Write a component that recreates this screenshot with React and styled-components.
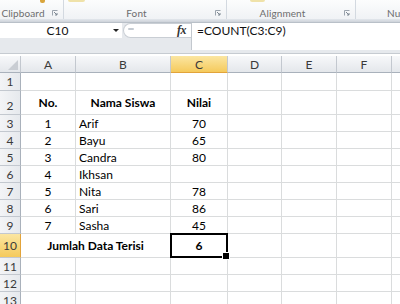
import React from 'react';
import styled, { createGlobalStyle, css } from 'styled-components';

const GlobalStyle = createGlobalStyle`
  html, body { margin: 0; padding: 0; background: #fff; overflow: hidden; }
  body { font-family: Lato, "Liberation Sans", sans-serif; width: 400px; height: 304px; }
  * { box-sizing: border-box; }
`;

const COLS = [21, 55, 95, 57, 54, 55, 55, 60];
const HEADER_BORDER = '#c3c8cf';
const GRID = '#dadcdd';

/* ---------- Ribbon ---------- */
const Ribbon = styled.div`
  display: flex;
  height: 19px;
  background: linear-gradient(#fcfdfd, #f0f2f5);
  overflow: hidden;
`;

const Group = styled.div`
  flex: none;
  width: ${(p) => p.$w}px;
  height: 100%;
  display: flex;
  flex-direction: column;
  border-right: 1px solid #d3d9e0;
`;

const IconStrip = styled.div`
  height: 5px;
  display: flex;
  align-items: flex-start;
`;

const IconBit = styled.span`
  display: block;
  margin-left: ${(p) => p.$x}px;
  width: ${(p) => p.$w}px;
  height: ${(p) => p.$h}px;
  background: ${(p) => p.$c};
  border-radius: 0 0 2px 2px;
`;

const LabelRow = styled.div`
  flex: 1;
  display: flex;
  align-items: center;
  padding-top: 3px;
`;

const GroupLabel = styled.span`
  flex: 1;
  text-align: ${(p) => (p.$left ? 'left' : 'center')};
  padding-left: ${(p) => (p.$left ? '31px' : '0')};
  padding-right: ${(p) => (p.$left ? '0' : '6px')};
  font-size: 10px;
  letter-spacing: 0.1px;
  color: #6d6d6d;
  white-space: nowrap;
`;

const LauncherBox = styled.span`
  flex: none;
  width: 6px;
  height: 6px;
  margin-right: 5px;
  display: flex;
`;

const Launcher = () => (
  <LauncherBox>
    <svg width="6" height="6" viewBox="0 0 6 6">
      <path d="M0.5 5.5V0.5H5.5" stroke="#9aa3ad" fill="none" strokeWidth="1" />
      <path d="M2 2L5 5M5 3V5H3" stroke="#7d8792" fill="none" strokeWidth="1" />
    </svg>
  </LauncherBox>
);

const RibbonEdge = styled.div`
  height: 4px;
  background: linear-gradient(#e3e7ec, #cdd2d9);
  border-bottom: 1px solid #b9c0c8;
`;

/* ---------- Formula bar ---------- */
const FormulaBar = styled.div`
  display: flex;
  height: 31px;
  background: #e6e9ed;
  border-bottom: 1px solid #c6cbd1;
`;

const NameBox = styled.div`
  flex: none;
  width: 122px;
  height: 15px;
  background: #fff;
  display: flex;
  align-items: center;
  font-size: 12px;
  color: #111;
`;

const NameText = styled.span`
  flex: 1;
  text-align: center;
  padding-left: 2px;
`;

const DropArrow = styled.span`
  width: 0;
  height: 0;
  margin-right: 3px;
  border-left: 3px solid transparent;
  border-right: 3px solid transparent;
  border-top: 3px solid #222;
`;

const FxBox = styled.div`
  flex: none;
  width: 68px;
  height: 15px;
  margin-left: 1px;
  background: #fff;
  border: 1px solid #c9ced4;
  border-right: none;
  border-radius: 8px 0 0 8px;
  display: flex;
  align-items: center;
  justify-content: space-between;
  padding: 0 5px 0 4px;
`;

const Grip = styled.span`
  width: 6px;
  height: 2px;
  background: #c5cbd2;
  border-radius: 1px;
  margin-top: -4px;
`;

const Fx = styled.span`
  font-family: "Liberation Serif", serif;
  font-style: italic;
  font-weight: bold;
  font-size: 12px;
  color: #333;
  letter-spacing: -0.5px;
`;

const FormulaInput = styled.div`
  flex: 1;
  height: 27px;
  background: #fff;
  border-left: 1px solid #c3c8ce;
  padding-left: 5px;
  font-size: 12px;
  line-height: 15px;
  color: #111;
`;

const Gap = styled.div`
  height: 2px;
  background: #fff;
`;

/* ---------- Grid ---------- */
const Sheet = styled.div`
  display: flex;
  flex-direction: column;
  font-size: 12px;
`;

const Row = styled.div`
  display: flex;
  flex: none;
  height: ${(p) => p.$h}px;
`;

const HeaderCell = styled.div`
  flex: none;
  width: ${(p) => p.$w}px;
  height: 100%;
  display: flex;
  align-items: center;
  justify-content: center;
  color: #3a3a3a;
  font-size: 12px;
  border-right: 1px solid ${HEADER_BORDER};
  border-bottom: 1px solid #a9b1bb;
  background: linear-gradient(#f7f8fa, #e4e7eb);
  ${(p) =>
    p.$sel &&
    css`
      background: linear-gradient(#fbe6a2, #f5ca5c);
      border-bottom-color: #e2a33a;
    `}
`;

const Corner = styled(HeaderCell)`
  align-items: flex-end;
  justify-content: flex-end;
  padding: 0 2px 2px 0;
`;

const RowHead = styled.div`
  flex: none;
  width: ${COLS[0]}px;
  height: 100%;
  display: flex;
  align-items: ${(p) => (p.$bottom ? 'flex-end' : 'center')};
  justify-content: center;
  padding-bottom: ${(p) => (p.$bottom ? '1px' : '0')};
  color: #3a3a3a;
  font-size: 12px;
  border-right: 1px solid #a9b1bb;
  border-bottom: 1px solid ${HEADER_BORDER};
  background: linear-gradient(90deg, #f3f4f6, #e6e9ed);
  ${(p) =>
    p.$sel &&
    css`
      background: linear-gradient(#fbe6a2, #f5ca5c);
      border-right-color: #e2a33a;
    `}
`;

const Cell = styled.div`
  position: relative;
  flex: none;
  width: ${(p) => p.$w}px;
  height: 100%;
  display: flex;
  align-items: center;
  justify-content: ${(p) => (p.$align === 'left' ? 'flex-start' : 'center')};
  padding-left: ${(p) => (p.$align === 'left' ? '3px' : '0')};
  font-weight: ${(p) => (p.$bold ? 700 : 400)};
  color: #000;
  white-space: nowrap;
  border-right: 1px solid ${GRID};
  border-bottom: 1px solid ${GRID};
  ${(p) =>
    p.$active &&
    css`
      &::after {
        content: '';
        position: absolute;
        top: -1px;
        left: -1px;
        right: -1px;
        bottom: -1px;
        border: 2px solid #000;
      }
      &::before {
        content: '';
        position: absolute;
        right: -3px;
        bottom: -3px;
        width: 6px;
        height: 6px;
        background: #000;
        border: 1px solid #fff;
        z-index: 2;
      }
    `}
`;

const CornerTriangle = () => (
  <svg width="10" height="10" viewBox="0 0 10 10">
    <path d="M10 0V10H0Z" fill="#c9cdd3" />
  </svg>
);

const LETTERS = ['A', 'B', 'C', 'D', 'E', 'F', 'G'];

const students = [
  ['1', 'Arif', '70'],
  ['2', 'Bayu', '65'],
  ['3', 'Candra', '80'],
  ['4', 'Ikhsan', ''],
  ['5', 'Nita', '78'],
  ['6', 'Sari', '86'],
  ['7', 'Sasha', '45'],
];

const EmptyTail = () =>
  COLS.slice(4).map((w, i) => <Cell key={i} $w={w} />);

export default function App() {
  return (
    <>
      <GlobalStyle />
      <Ribbon>
        <Group $w={64}>
          <IconStrip>
            <IconBit $x={40} $w={5} $h={3} $c="#d9a53c" />
          </IconStrip>
          <LabelRow>
            <GroupLabel>Clipboard</GroupLabel>
            <Launcher />
          </LabelRow>
        </Group>
        <Group $w={163}>
          <IconStrip>
            <IconBit $x={4} $w={17} $h={2} $c="#efe2a9" />
          </IconStrip>
          <LabelRow>
            <GroupLabel>Font</GroupLabel>
            <Launcher />
          </LabelRow>
        </Group>
        <Group $w={129}>
          <IconStrip>
            <IconBit $x={23} $w={15} $h={2} $c="#efe2a9" />
          </IconStrip>
          <LabelRow>
            <GroupLabel>Alignment</GroupLabel>
            <Launcher />
          </LabelRow>
        </Group>
        <Group $w={60}>
          <IconStrip />
          <LabelRow>
            <GroupLabel $left>Number</GroupLabel>
          </LabelRow>
        </Group>
      </Ribbon>
      <RibbonEdge />
      <FormulaBar>
        <NameBox>
          <NameText>C10</NameText>
          <DropArrow />
        </NameBox>
        <FxBox>
          <Grip />
          <Fx>fx</Fx>
        </FxBox>
        <FormulaInput>=COUNT(C3:C9)</FormulaInput>
      </FormulaBar>
      <Gap />
      <Sheet>
        <Row $h={17}>
          <Corner $w={COLS[0]}>
            <CornerTriangle />
          </Corner>
          {LETTERS.map((l, i) => (
            <HeaderCell key={l} $w={COLS[i + 1]} $sel={l === 'C'}>
              {l}
            </HeaderCell>
          ))}
        </Row>
        <Row $h={18}>
          <RowHead>1</RowHead>
          <Cell $w={COLS[1]} />
          <Cell $w={COLS[2]} />
          <Cell $w={COLS[3]} />
          <EmptyTail />
        </Row>
        <Row $h={24}>
          <RowHead $bottom>2</RowHead>
          <Cell $w={COLS[1]} $bold>No.</Cell>
          <Cell $w={COLS[2]} $bold>Nama Siswa</Cell>
          <Cell $w={COLS[3]} $bold>Nilai</Cell>
          <EmptyTail />
        </Row>
        {students.map(([no, name, score], i) => (
          <Row $h={17} key={no}>
            <RowHead>{i + 3}</RowHead>
            <Cell $w={COLS[1]}>{no}</Cell>
            <Cell $w={COLS[2]} $align="left">{name}</Cell>
            <Cell $w={COLS[3]}>{score}</Cell>
            <EmptyTail />
          </Row>
        ))}
        <Row $h={24}>
          <RowHead $sel>10</RowHead>
          <Cell $w={COLS[1] + COLS[2]} $bold>Jumlah Data Terisi</Cell>
          <Cell $w={COLS[3]} $bold $active>6</Cell>
          <EmptyTail />
        </Row>
        {[11, 12, 13].map((n) => (
          <Row $h={17} key={n}>
            <RowHead>{n}</RowHead>
            <Cell $w={COLS[1]} />
            <Cell $w={COLS[2]} />
            <Cell $w={COLS[3]} />
            <EmptyTail />
          </Row>
        ))}
      </Sheet>
    </>
  );
}
